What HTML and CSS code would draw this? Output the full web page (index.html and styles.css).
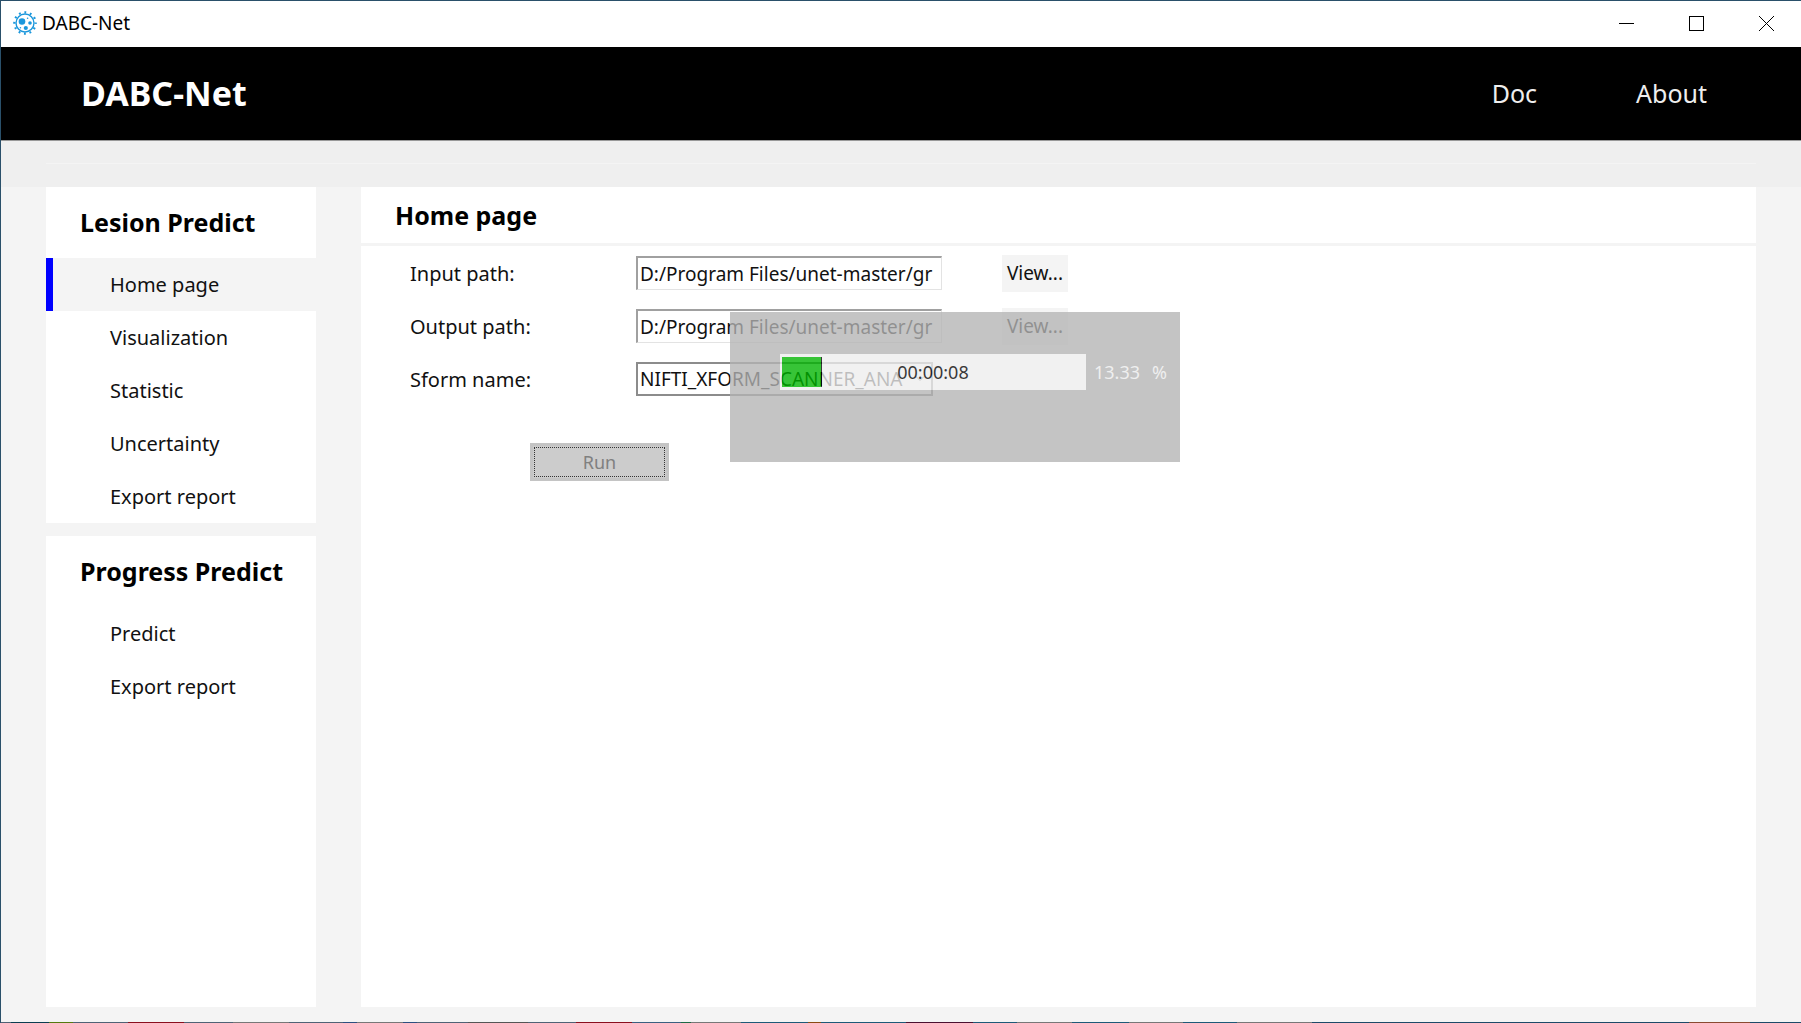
FILE: index.html
```html
<!DOCTYPE html>
<html lang="en">
<head>
<meta charset="utf-8">
<title>DABC-Net</title>
<link rel="stylesheet" href="styles.css">
</head>
<body>
<div class="window">
  <div class="titlebar">
    <svg class="app-icon" viewBox="0 0 24 24" aria-hidden="true">
      <circle cx="12" cy="12" r="9" fill="none" stroke="#1b97dc" stroke-width="1.4"/>
      <circle cx="12" cy="12" r="10.7" fill="none" stroke="#1b97dc" stroke-width="2.2" stroke-dasharray="1.9 3.702" stroke-dashoffset="0.95"/>
      <circle cx="9" cy="10.5" r="3.3" fill="#1b97dc"/>
      <circle cx="12.8" cy="17" r="2.1" fill="#1b97dc"/>
      <circle cx="17" cy="12" r="1.8" fill="#1b97dc"/>
      <circle cx="14.6" cy="7.2" r="0.8" fill="#1b97dc"/>
      <circle cx="7.4" cy="16.8" r="0.8" fill="#1b97dc"/>
    </svg>
    <span class="window-title">DABC-Net</span>
    <div class="window-controls">
      <button type="button" aria-label="Minimize"><svg viewBox="0 0 15 15" shape-rendering="crispEdges"><path d="M0 7.5h15"/></svg></button>
      <button type="button" aria-label="Maximize"><svg viewBox="0 0 15 15" shape-rendering="crispEdges"><path d="M.5.5h14v14H.5z"/></svg></button>
      <button type="button" aria-label="Close"><svg viewBox="0 0 15 15"><path d="M0 0l15 15M15 0L0 15"/></svg></button>
    </div>
  </div>

  <header class="header">
    <h1 class="brand">DABC-Net</h1>
    <nav class="header-nav">
      <a href="#doc">Doc</a>
      <a href="#about">About</a>
    </nav>
  </header>

  <div class="band"><hr></div>

  <div class="content">
    <nav class="sidebar">
      <section class="menu">
        <h2>Lesion Predict</h2>
        <ul>
          <li><a class="active" href="#home">Home page</a></li>
          <li><a href="#visualization">Visualization</a></li>
          <li><a href="#statistic">Statistic</a></li>
          <li><a href="#uncertainty">Uncertainty</a></li>
          <li><a href="#export-lesion">Export report</a></li>
        </ul>
      </section>
      <section class="menu menu-fill">
        <h2>Progress Predict</h2>
        <ul>
          <li><a href="#predict">Predict</a></li>
          <li><a href="#export-progress">Export report</a></li>
        </ul>
      </section>
    </nav>

    <main class="panel">
      <h2 class="panel-title">Home page</h2>
      <form class="form">
        <label for="input-path">Input path:</label>
        <input id="input-path" type="text" value="D:/Program Files/unet-master/gr">
        <button type="button" class="view">View...</button>

        <label for="output-path">Output path:</label>
        <input id="output-path" type="text" value="D:/Program Files/unet-master/gr">
        <button type="button" class="view">View...</button>

        <label for="sform">Sform name:</label>
        <div class="select-wrap">
          <select id="sform"><option>NIFTI_XFORM_SCANNER_ANA</option></select>
          <svg class="chevron" viewBox="0 0 10 6" aria-hidden="true"><path d="M1 .5l4 4 4-4"/></svg>
        </div>

        <button type="button" class="run" disabled>Run</button>
      </form>

      <div class="dialog" role="dialog" aria-label="Progress">
        <div class="bar">
          <progress id="progress" value="13.33" max="100"></progress>
          <label class="elapsed" for="progress">00:00:08</label>
        </div>
        <span class="percent">13.33</span>
        <span class="unit">%</span>
      </div>
    </main>
  </div>
</div>
</body>
</html>
```
FILE: styles.css
```css
* {
  box-sizing: border-box;
}

body {
  margin: 0;
  font-family: "Noto Sans", "Open Sans", sans-serif;
  font-size: 20px;
  line-height: 28px;
  color: #111;
}

h1, h2, ul {
  margin: 0;
  padding: 0;
}

a {
  color: inherit;
  text-decoration: none;
}

button, input, select {
  font: inherit;
  color: inherit;
}

.window {
  display: flex;
  flex-direction: column;
  min-height: 100vh;
  background: #f4f4f4;
  border: 1px solid #2a506a;
  border-right: 0;
  border-bottom: 0;
}

/* desktop colours showing along the lower edge */
.window::after {
  content: "";
  height: 1px;
  background: linear-gradient(90deg,
    #4f6275 0 10px, #0b3d50 10px 48px, #557a10 48px 72px, #4f6275 72px 127px,
    #8a0f1e 127px 183px, #4f6275 183px 232px, #777 232px 288px, #4f6275 288px 342px,
    #2c4f80 342px 356px, #777 356px 402px, #2c4f80 402px 416px, #4f6275 416px 467px,
    #555 467px 527px, #4f6275 527px 575px, #8a0f1e 575px 631px, #3a6080 631px 680px,
    #1d6a45 680px 690px, #777 690px 740px, #1d5a78 740px 807px, #8a4a12 807px 820px,
    #1d5a78 820px 905px, #4a1030 905px 972px, #1d5a78 972px 1016px, #777 1016px 1071px,
    #1d5a78 1071px 1128px, #777 1128px 1182px, #1d5a78 1182px 1236px, #777 1236px 1311px,
    #1d4a68 1311px 1688px, #8a4a30 1688px 1749px, #1d4a68 1749px);
}

.titlebar {
  display: flex;
  align-items: center;
  height: 46px;
  padding: 0 0 2px 12px;
  background: #fff;
}

.app-icon {
  width: 24px;
  height: 24px;
}

.window-title {
  margin-left: 5px;
  font-size: 19px;
  color: #000;
}

.window-controls {
  display: flex;
  align-self: stretch;
  margin-left: auto;
}

.window-controls button {
  display: grid;
  place-items: center;
  width: 70px;
  padding: 0;
  border: 0;
  background: none;
}

.window-controls svg {
  width: 15px;
  height: 15px;
  fill: none;
  stroke: #000;
}

.header {
  display: flex;
  align-items: center;
  justify-content: space-between;
  height: 94px;
  padding: 0 94px 2px 80px;
  background: #000;
  border-bottom: 1px solid #999;
  color: #fff;
}

.brand {
  font-size: 34px;
  line-height: 44px;
}

.header-nav {
  display: flex;
  gap: 99px;
  font-size: 25px;
  color: #eee;
}

.band {
  height: 46px;
  padding: 22px 45px 0;
  background: #efefef;
}

.band hr {
  height: 1px;
  margin: 0;
  border: 0;
  background: #f4f4f4;
}

.content {
  display: flex;
  flex: 1;
  gap: 45px;
  padding: 0 45px 15px;
}

.sidebar {
  display: flex;
  flex: none;
  flex-direction: column;
  gap: 13px;
  width: 270px;
}

.menu {
  background: #fff;
}

.menu-fill {
  flex: 1;
}

.menu h2 {
  padding: 17px 0 18px 34px;
  font-size: 25px;
  line-height: 36px;
  color: #000;
  white-space: nowrap;
}

.menu ul {
  list-style: none;
}

.menu a {
  display: block;
  padding: 13px 0 12px 57px;
  border-left: 7px solid transparent;
}

.menu .active {
  background: #f4f4f4;
  border-left-color: #00f;
}

.panel {
  position: relative;
  flex: 1;
  background: #fff;
}

.panel-title {
  padding: 10px 34px;
  border-bottom: 3px solid #f4f4f4;
  font-size: 25px;
  line-height: 36px;
  color: #000;
}

.form {
  display: grid;
  grid-template-columns: 226px 306px auto;
  grid-auto-rows: 38px;
  row-gap: 15px;
  align-items: center;
  justify-content: start;
  padding: 8px 49px;
}

.form label {
  padding-top: 2px;
}

.form input {
  width: 306px;
  height: 34px;
  padding: 0 2px;
  border: 1px solid #e3e3e3;
  border-top: 2px solid #a0a0a0;
  border-left: 2px solid #a0a0a0;
  font-size: 19px;
}

.view {
  width: 66px;
  height: 37px;
  margin-left: 60px;
  padding: 0;
  border: 0;
  background: #f4f4f4;
  font-size: 19px;
}

.select-wrap {
  display: grid;
  align-items: center;
  width: 297px;
}

.select-wrap > * {
  grid-area: 1 / 1;
}

.form select {
  width: 100%;
  height: 34px;
  padding: 0 2px;
  appearance: none;
  background: #fff;
  border: 2px solid #8c8c8c;
  border-radius: 0;
  font-size: 19px;
}

.chevron {
  justify-self: end;
  width: 10px;
  height: 6px;
  margin-right: 8px;
  fill: none;
  stroke: #555;
}

.run {
  grid-column: 1 / -1;
  width: 139px;
  height: 38px;
  margin: 60px 0 0 120px;
  border: 3px solid #c4c4c4;
  background: #ccc;
  outline: 1px dotted #333;
  outline-offset: -5px;
  font-size: 18px;
}

.form .run:disabled {
  color: #808080;
}

/* translucent progress window floating over the form */
.dialog {
  position: absolute;
  top: 125px;
  left: 369px;
  display: flex;
  align-items: center;
  width: 450px;
  height: 150px;
  padding: 0 0 30px 50px;
  background: #b4b4b4;
  opacity: 0.78;
  font-size: 18px;
  color: #ebebeb;
}

.bar {
  display: grid;
  width: 306px;
  height: 36px;
  padding: 3px 2px;
  background: #eee;
}

.bar > * {
  grid-area: 1 / 1;
}

.bar progress {
  width: 100%;
  height: 30px;
  appearance: none;
  border: 0;
}

.bar progress::-webkit-progress-bar {
  background: #eee;
}

.bar progress::-webkit-progress-value {
  background: #00b400;
  border-right: 1px solid #000;
}

.elapsed {
  z-index: 1;
  place-self: center;
  color: #000;
}

.percent {
  margin-left: 8px;
}

.unit {
  margin-left: 12px;
}
```
